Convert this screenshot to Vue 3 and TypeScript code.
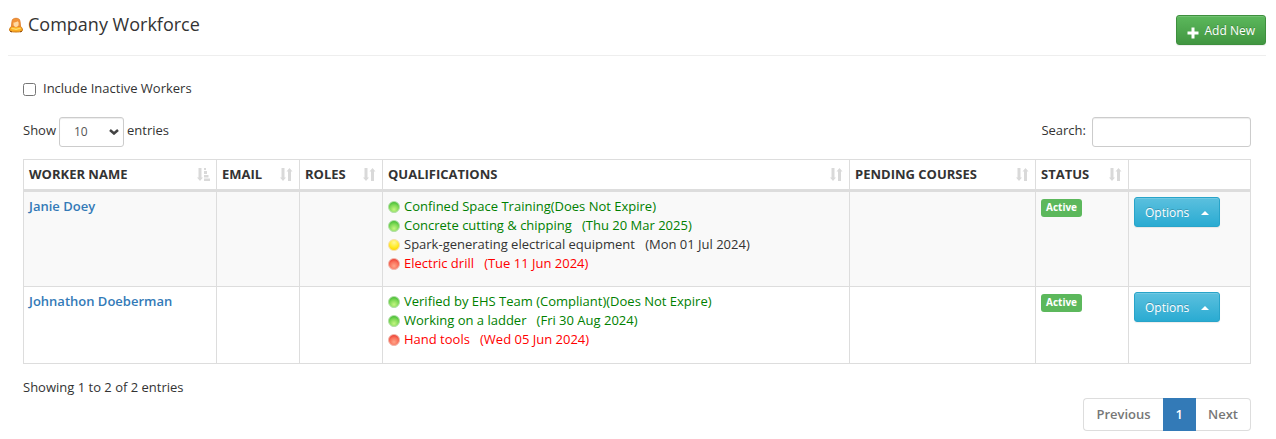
<script setup lang="ts">
import { ref } from 'vue'

type Level = 'green' | 'yellow' | 'red'

interface Qualification {
  name: string
  note: string
  spaced: boolean
  level: Level
}

interface Worker {
  name: string
  qualifications: Qualification[]
  status: string
}

const columns = [
  { key: 'name', label: 'Worker Name', sort: 'asc' },
  { key: 'email', label: 'Email', sort: 'both' },
  { key: 'roles', label: 'Roles', sort: 'both' },
  { key: 'qualifications', label: 'Qualifications', sort: 'both' },
  { key: 'pending', label: 'Pending Courses', sort: 'both' },
  { key: 'status', label: 'Status', sort: 'both' },
  { key: 'actions', label: '', sort: 'none' },
]

const workers: Worker[] = [
  {
    name: 'Janie Doey',
    status: 'Active',
    qualifications: [
      { name: 'Confined Space Training', note: '(Does Not Expire)', spaced: false, level: 'green' },
      { name: 'Concrete cutting & chipping', note: '(Thu 20 Mar 2025)', spaced: true, level: 'green' },
      { name: 'Spark-generating electrical equipment', note: '(Mon 01 Jul 2024)', spaced: true, level: 'yellow' },
      { name: 'Electric drill', note: '(Tue 11 Jun 2024)', spaced: true, level: 'red' },
    ],
  },
  {
    name: 'Johnathon Doeberman',
    status: 'Active',
    qualifications: [
      { name: 'Verified by EHS Team (Compliant)', note: '(Does Not Expire)', spaced: false, level: 'green' },
      { name: 'Working on a ladder', note: '(Fri 30 Aug 2024)', spaced: true, level: 'green' },
      { name: 'Hand tools', note: '(Wed 05 Jun 2024)', spaced: true, level: 'red' },
    ],
  },
]

const includeInactive = ref(false)
const pageSize = ref('10')
const search = ref('')
</script>

<template>
  <main class="page">
    <header class="page-header">
      <h1 class="title">
        <svg class="user-icon" viewBox="0 0 16 16" aria-hidden="true">
          <path d="M4.500 8.500C2.800 9.500 1.500 11.500 1.500 13C1.500 14.300 3 15 8 15S14.500 14.300 14.500 13C14.500 11.500 13.200 9.500 11.500 8.500Z" fill="#fbac22" stroke="#cf7a17" />
          <path d="M3.500 11.800C5 10.500 6.500 12.300 8 12.300S11 10.500 12.500 11.800" fill="none" stroke="#ffd861" stroke-width="1.500" />
          <path d="M2 14.200L4 14.900M14 14.200L12 14.900" stroke="#8c4a10" />
          <path d="M3.500 9.500L4 4.500C4.200 2 5.800 1.300 8 1.300S11.800 2 12 4.500L12.500 9.500Z" fill="#f29338" stroke="#e28534" />
          <path d="M5.500 5.500C7.200 5.400 8.800 4.900 9.800 4.200L10.600 5.500V7.200C10.600 9 9.400 9.900 8 9.900S5.500 9 5.500 7.200Z" fill="#ffd9a3" />
        </svg>
        Company Workforce
      </h1>
      <button class="btn btn-add" type="button">
        <svg class="plus" viewBox="0 0 12 12" aria-hidden="true">
          <path d="M4.500 0.500H7.500V4.500H11.500V7.500H7.500V11.500H4.500V7.500H.5V4.500H4.500Z" fill="#fff" />
        </svg>
        Add New
      </button>
    </header>

    <section class="content">
      <label class="inactive">
        <input v-model="includeInactive" type="checkbox" />
        Include Inactive Workers
      </label>

      <div class="controls">
        <label class="length">
          Show
          <span class="select-wrap">
            <select v-model="pageSize" class="field">
              <option>10</option>
              <option>25</option>
              <option>50</option>
              <option>100</option>
            </select>
            <svg class="chevron" viewBox="0 0 10 6" aria-hidden="true">
              <path d="M1 1L5 4.500L9 1" fill="none" stroke="#444" stroke-width="2.500" />
            </svg>
          </span>
          entries
        </label>
        <label class="search">
          Search:
          <input v-model="search" class="field" type="search" />
        </label>
      </div>

      <table class="workers">
        <colgroup>
          <col v-for="c in columns" :key="c.key" :class="'col-' + c.key" />
        </colgroup>
        <thead>
          <tr>
            <th v-for="c in columns" :key="c.key" scope="col">
              <div class="th-inner">
                {{ c.label }}
                <svg v-if="c.sort !== 'none'" class="sort" viewBox="0 0 13 13" aria-hidden="true">
                  <path d="M1.500 0H4.500V9.500H6L3 13L0 9.500H1.500Z" />
                  <path v-if="c.sort === 'both'" d="M8 13H11V3.500H12.500L9.500 0L6.500 3.500H8Z" />
                  <path v-else d="M7 0H9V2H7ZM7 3H10V6H7ZM7 7H11.500V9.500H7ZM7 10.500H13V13H7Z" />
                </svg>
              </div>
            </th>
          </tr>
        </thead>
        <tbody>
          <tr v-for="w in workers" :key="w.name">
            <td><a class="worker" href="#">{{ w.name }}</a></td>
            <td></td>
            <td></td>
            <td>
              <ul class="quals">
                <li v-for="q in w.qualifications" :key="q.name" :class="'level-' + q.level">
                  <span class="dot"></span>
                  <span>{{ q.name }}<template v-if="q.spaced">&nbsp;&nbsp; </template>{{ q.note }}</span>
                </li>
              </ul>
            </td>
            <td></td>
            <td><span class="badge">{{ w.status }}</span></td>
            <td>
              <button class="btn btn-options" type="button">
                Options
                <svg class="caret" viewBox="0 0 8 4" aria-hidden="true"><path d="M0 4L4 0L8 4Z" fill="#fff" /></svg>
              </button>
            </td>
          </tr>
        </tbody>
      </table>

      <footer class="table-footer">
        <div class="info">Showing 1 to 2 of 2 entries</div>
        <nav class="pagination" aria-label="Pages">
          <a href="#">Previous</a>
          <a class="current" href="#" aria-current="page">1</a>
          <a href="#">Next</a>
        </nav>
      </footer>
    </section>
  </main>
</template>

<style>
body {
  background: #fff;
}
</style>

<style scoped>
.page {
  padding: 15px 10px 0 8px;
  color: #333;
  font-family: "Open Sans", "Noto Sans", sans-serif;
  font-size: 13px;
  line-height: 19px;
}
.page *,
.page *::before {
  box-sizing: border-box;
}
.page-header {
  display: flex;
  justify-content: space-between;
  align-items: flex-start;
  height: 41px;
  border-bottom: 1px solid #eee;
}
.title {
  display: flex;
  align-items: center;
  gap: 4px;
  margin: 0;
  font-size: 18px;
  font-weight: 400;
  line-height: 18px;
}
.user-icon {
  width: 16px;
  height: 16px;
  margin-top: 2px;
}
.btn {
  display: inline-flex;
  align-items: center;
  height: 30px;
  padding: 0 10px;
  border: 1px solid;
  border-radius: 3px;
  color: #fff;
  font: inherit;
  font-size: 12px;
  text-shadow: 0 -1px 0 rgba(0, 0, 0, 0.2);
  box-shadow: inset 0 1px 0 rgba(255, 255, 255, 0.15), 0 1px 1px rgba(0, 0, 0, 0.075);
}
.btn-add {
  gap: 6px;
  border-color: #3e8f3e;
  background: linear-gradient(#5cb85c, #419641);
}
.plus {
  width: 12px;
  height: 12px;
  margin-top: 5px;
}
.btn-options {
  gap: 12px;
  border-color: #28a4c9;
  background: linear-gradient(#5bc0de, #2aabd2);
}
.caret {
  width: 8px;
  height: 4px;
  margin-top: 2px;
}
.content {
  padding: 23px 15px 0;
}
.inactive {
  display: flex;
  align-items: center;
  gap: 7px;
}
.inactive input {
  width: 13px;
  height: 13px;
  margin: 2px 0 0;
}
.controls {
  display: flex;
  justify-content: space-between;
  margin-top: 19px;
}
.length,
.search {
  display: flex;
  gap: 3px;
  line-height: 27px;
}
.search {
  gap: 6px;
}
.field {
  height: 30px;
  border: 1px solid #ccc;
  border-radius: 3px;
  background: #fff;
  color: #555;
  font: inherit;
  font-size: 12px;
  line-height: 18px;
  box-shadow: inset 0 1px 1px rgba(0, 0, 0, 0.075);
}
.search .field {
  width: 159px;
  padding: 5px 10px;
}
.select-wrap {
  position: relative;
}
.select-wrap .field {
  display: block;
  width: 65px;
  padding: 0 14px;
  appearance: none;
}
.chevron {
  position: absolute;
  top: 12px;
  right: 5px;
  width: 10px;
  height: 6px;
  pointer-events: none;
}
.workers {
  width: 100%;
  margin-top: 12px;
  border-collapse: collapse;
  table-layout: fixed;
}
.col-name {
  width: 193px;
}
.col-email,
.col-roles {
  width: 83px;
}
.col-pending {
  width: 186px;
}
.col-status {
  width: 93px;
}
.col-actions {
  width: 122px;
}
.workers th,
.workers td {
  border: 1px solid #ddd;
  text-align: left;
  vertical-align: top;
}
.workers th {
  height: 30px;
  padding: 5px;
  border-bottom-width: 3px;
  font-weight: 700;
  text-transform: uppercase;
  white-space: nowrap;
}
.workers td {
  height: 77px;
  padding: 5px 5px 13px;
}
.workers tbody tr:nth-child(odd) {
  background: #f9f9f9;
}
.th-inner {
  display: flex;
  justify-content: space-between;
  align-items: center;
}
.sort {
  width: 13px;
  height: 13px;
  margin-right: 1px;
  fill: #d9d9d9;
}
.workers td .btn,
.badge {
  vertical-align: top;
}
.worker {
  color: #337ab7;
  font-weight: 600;
  text-decoration: none;
}
.quals {
  margin: 0;
  padding: 0;
  list-style: none;
}
.quals li {
  display: flex;
  align-items: center;
  gap: 4px;
}
.dot {
  width: 12px;
  height: 12px;
  margin-top: 1px;
  border-radius: 50%;
}
.level-green {
  color: #008000;
}
.level-red {
  color: #f00;
}
.level-green .dot {
  border: 1px solid #b4e0a8;
  background: radial-gradient(circle at 50% 75%, #c4f582, #7fd955 50%, #42bb35 85%);
}
.level-yellow .dot {
  border: 1px solid #f8dfae;
  background: radial-gradient(circle at 50% 25%, #fff79a, #ffec2e 50%, #fdd400 85%);
}
.level-red .dot {
  border: 1px solid #f2b9ae;
  background: radial-gradient(circle at 50% 70%, #ffa589, #f9705a 50%, #ea3a30 85%);
}
.badge {
  display: inline-block;
  height: 18px;
  margin-top: 2px;
  padding: 0 5px;
  border-radius: 3px;
  background: #5cb85c;
  color: #fff;
  font-size: 10px;
  font-weight: 700;
  line-height: 17px;
}
.table-footer {
  display: flex;
  justify-content: space-between;
  margin-top: 14px;
}
.pagination {
  display: flex;
  margin-top: 20px;
}
.pagination a {
  padding: 6px 12px;
  border: 1px solid #ddd;
  color: #777;
  font-weight: 600;
  text-decoration: none;
}
.pagination a:first-child {
  border-right: 0;
  border-radius: 4px 0 0 4px;
}
.pagination a:last-child {
  border-left: 0;
  border-radius: 0 4px 4px 0;
}
.pagination .current {
  border-color: #337ab7;
  background: #337ab7;
  color: #fff;
}
</style>
